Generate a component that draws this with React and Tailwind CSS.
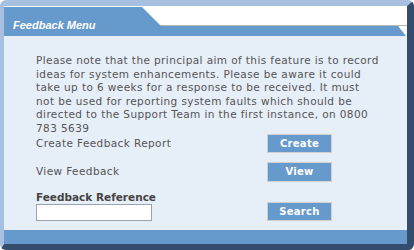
export default function App() {
  const font = { fontFamily: '"DejaVu Sans", Verdana, sans-serif' };
  return (
    <div className="w-[414px] h-[250px] bg-white" style={font}>
      <div className="w-[414px] h-[250px] flex flex-col rounded-[6px] border-t-[6px] border-l-[4px] border-r-[7px] border-b-[6px] border-t-[#a7c0e0] border-l-[#a7c0e0] border-r-[#344d6c] border-b-[#344d6c] overflow-hidden">
        <div className="h-[30px] shrink-0 bg-[linear-gradient(to_bottom,#fff_0,#fff_19px,#b8b8b8_19px,#b8b8b8_20px,#fff_20px)]">
          <div className="h-full bg-[#6699cc] [clip-path:polygon(0_1px,138px_1px,157px_20px,calc(100%-9px)_20px,calc(100%-1px)_100%,0_100%)] pl-[9px] pt-[6px]">
            <span className="text-white font-bold italic text-[11px] leading-[14px]" style={{ fontFamily: '"Liberation Sans", Arial, sans-serif' }}>Feedback Menu</span>
          </div>
        </div>
        <div className="flex-1 bg-[#e6eef8] pl-[32px] pt-[18px] text-[#555] text-[10.5px]">
          <p className="w-[360px] leading-[13.5px] tracking-[0.4px] whitespace-nowrap">
            Please note that the principal aim of this feature is to record<br />
            ideas for system enhancements. Please be aware it could<br />
            take up to 6 weeks for a response to be received. It must<br />
            not be used for reporting system faults which should be<br />
            directed to the Support Team in the first instance, on 0800<br />
            783 5639
          </p>
          <div className="grid grid-cols-[231px_65px] items-center mt-[-1px]">
            <span className="tracking-[0.4px]">Create Feedback Report</span>
            <button className="h-[19px] bg-[#6699cc] border border-[#cfcfcf] text-white font-bold text-[10px] leading-none tracking-[0.3px]">Create</button>
          </div>
          <div className="grid grid-cols-[231px_65px] items-center mt-[9px]">
            <span className="tracking-[0.4px]">View Feedback</span>
            <button className="h-[20px] bg-[#6699cc] border border-[#cfcfcf] text-white font-bold text-[10px] leading-none tracking-[0.3px]">View</button>
          </div>
          <div className="grid grid-cols-[231px_65px] items-end mt-[8px]">
            <div className="flex flex-col">
              <span className="font-bold text-[#444] text-[10.5px] leading-[14px]">Feedback Reference</span>
              <input className="w-[116px] h-[17px] bg-white border border-[#9aa3ad]" />
            </div>
            <button className="h-[19px] bg-[#6699cc] border border-[#cfcfcf] text-white font-bold text-[10px] leading-none tracking-[0.3px]">Search</button>
          </div>
        </div>
        <div className="h-[14px] shrink-0 bg-[#6699cc]" />
      </div>
    </div>
  );
}
